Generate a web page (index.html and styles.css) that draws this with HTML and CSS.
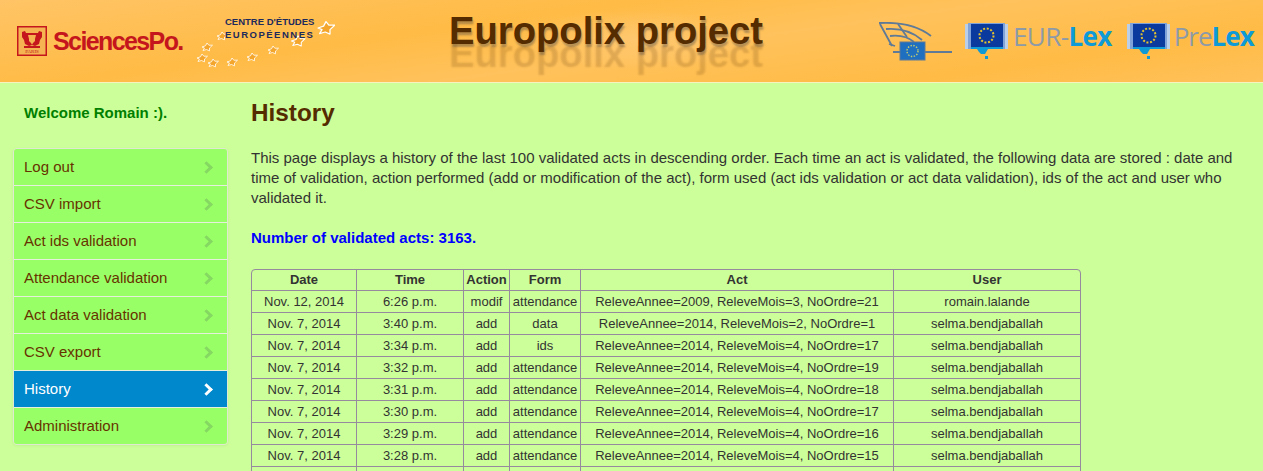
FILE: index.html
```html
<!DOCTYPE html>
<html lang="en">
<head>
    <meta charset="UTF-8">
    <title>Europolix project</title>
    <link rel="stylesheet" href="styles.css">
</head>
<body>
    <header class="banner">
        <div class="logo-sp">
            <svg class="crest" width="30" height="30" viewBox="0 0 30 30">
                <rect x="0.750" y="0.750" width="28.500" height="28.500" fill="#f5b351" stroke="#c4161c" stroke-width="1.500"/>
                <g fill="#c4161c">
                    <path d="M5 6l3-1 1 2 2 2 1 4 2 3 1 3-3 1-4-2-1-4-2-3z"/>
                    <path d="M25 6l-3-1-1 2-2 2-1 4-2 3-1 3 3 1 4-2 1-4 2-3z"/>
                    <rect x="9" y="7" width="12" height="2"/>
                    <rect x="7" y="20" width="16" height="2"/>
                </g>
                <path d="M12 10h6v5l-3 3-3-3z" fill="#f5b351"/>
                <text class="crest-word" x="15" y="27" text-anchor="middle">PARIS</text>
            </svg>
            <span class="sp-name">SciencesPo.</span>
        </div>

        <div class="logo-cee">
            <svg class="cee-stars" width="138" height="50" viewBox="0 0 138 50">
                <defs>
                    <polygon id="star" points="-5,0 -1.500,-1.200 0,-4 1.800,-1.800 5.500,-1.800 2.500,1 2.500,3.800 -0.500,2.500 -4,3.500 -2.500,1"/>
                </defs>
                <g fill="#f3a52c" stroke="#fff" stroke-width="0.800" stroke-linejoin="round">
                    <use href="#star" x="5" y="37"/>
                    <use href="#star" x="16" y="42"/>
                    <use href="#star" x="35" y="41"/>
                    <use href="#star" x="55" y="36"/>
                    <use href="#star" x="76" y="29"/>
                    <use href="#star" x="10" y="26"/>
                    <use href="#star" x="25" y="15"/>
                    <use href="#star" transform="translate(101 20) scale(1.300)"/>
                    <use href="#star" transform="translate(129 7) scale(1.600)"/>
                </g>
            </svg>
            <span class="cee-line">CENTRE D'ÉTUDES</span>
            <span class="cee-line">EUROPÉENNES</span>
        </div>

        <h1 class="title">Europolix project</h1>

        <div class="logos-right">
            <svg class="logo-ep" width="74" height="40" viewBox="0 0 74 40">
                <g fill="none" stroke="#5f7a96" stroke-width="1.800">
                    <path d="M1 1c19-1 38 2 52 13"/>
                    <path d="M2 2l12 22"/>
                    <path d="M8 7c13-1 26 2 36 11"/>
                    <path d="M12 14c9-1 17 0 24 6"/>
                    <path d="M20 2l9 13"/>
                    <path d="M11 22l6 2"/>
                    <path d="M15 30h8M46 30h28"/>
                </g>
                <rect x="22" y="20" width="25" height="18" fill="#1f6fc0" stroke="#5f7a96"/>
                <circle cx="34.500" cy="29" r="5.500" fill="none" stroke="#c3cd6e" stroke-width="1.400" stroke-dasharray="1.400 1.500"/>
            </svg>

            <div class="lex">
                <svg width="43" height="37" viewBox="0 0 43 37">
                    <use href="#lex-icon"/>
                </svg>
                <span class="lex-name">EUR-<b>Lex</b></span>
            </div>

            <div class="lex lex-pre">
                <svg width="43" height="37" viewBox="0 0 43 37">
                    <use href="#lex-icon"/>
                </svg>
                <span class="lex-name">Pre<b>Lex</b></span>
            </div>
        </div>
        <svg class="defs-only" width="0" height="0">
            <symbol id="lex-icon" viewBox="0 0 43 37">
                <rect x="0" y="1" width="43" height="25" fill="#b9cfea"/>
                <rect x="3" y="0" width="37" height="26" fill="#7fa3d8"/>
                <rect x="6" y="1" width="32" height="23" fill="#0b3a9e"/>
                <rect x="6" y="24" width="32" height="2" fill="#0e9ad7"/>
                <circle cx="21.500" cy="12.500" r="7" fill="none" stroke="#e2c230" stroke-width="2" stroke-dasharray="2 1.670"/>
                <path d="M12 26h11l-3 5h-4l-2-2z" fill="#0e9ad7"/>
                <rect x="20" y="33" width="3" height="3" fill="#0e9ad7"/>
            </symbol>
        </svg>
    </header>

    <div class="page">
        <aside class="sidebar">
            <p class="welcome">Welcome Romain :).</p>
            <nav class="menu">
                <a class="menu-item" href="#">Log out</a>
                <a class="menu-item" href="#">CSV import</a>
                <a class="menu-item" href="#">Act ids validation</a>
                <a class="menu-item" href="#">Attendance validation</a>
                <a class="menu-item" href="#">Act data validation</a>
                <a class="menu-item" href="#">CSV export</a>
                <a class="menu-item active" href="#">History</a>
                <a class="menu-item" href="#">Administration</a>
            </nav>
        </aside>

        <main class="content">
            <h2>History</h2>
            <p class="intro">This page displays a history of the last 100 validated acts in descending order. Each time an act is validated, the following data are stored : date and time of validation, action performed (add or modification of the act), form used (act ids validation or act data validation), ids of the act and user who validated it.</p>
            <p class="count">Number of validated acts: 3163.</p>

            <table class="history">
                <colgroup>
                    <col class="c-date"><col class="c-time"><col class="c-action"><col class="c-form"><col class="c-act"><col class="c-user">
                </colgroup>
                <tr><th>Date</th><th>Time</th><th>Action</th><th>Form</th><th>Act</th><th>User</th></tr>
                <tr><td>Nov. 12, 2014</td><td>6:26 p.m.</td><td>modif</td><td>attendance</td><td>ReleveAnnee=2009, ReleveMois=3, NoOrdre=21</td><td>romain.lalande</td></tr>
                <tr><td>Nov. 7, 2014</td><td>3:40 p.m.</td><td>add</td><td>data</td><td>ReleveAnnee=2014, ReleveMois=2, NoOrdre=1</td><td>selma.bendjaballah</td></tr>
                <tr><td>Nov. 7, 2014</td><td>3:34 p.m.</td><td>add</td><td>ids</td><td>ReleveAnnee=2014, ReleveMois=4, NoOrdre=17</td><td>selma.bendjaballah</td></tr>
                <tr><td>Nov. 7, 2014</td><td>3:32 p.m.</td><td>add</td><td>attendance</td><td>ReleveAnnee=2014, ReleveMois=4, NoOrdre=19</td><td>selma.bendjaballah</td></tr>
                <tr><td>Nov. 7, 2014</td><td>3:31 p.m.</td><td>add</td><td>attendance</td><td>ReleveAnnee=2014, ReleveMois=4, NoOrdre=18</td><td>selma.bendjaballah</td></tr>
                <tr><td>Nov. 7, 2014</td><td>3:30 p.m.</td><td>add</td><td>attendance</td><td>ReleveAnnee=2014, ReleveMois=4, NoOrdre=17</td><td>selma.bendjaballah</td></tr>
                <tr><td>Nov. 7, 2014</td><td>3:29 p.m.</td><td>add</td><td>attendance</td><td>ReleveAnnee=2014, ReleveMois=4, NoOrdre=16</td><td>selma.bendjaballah</td></tr>
                <tr><td>Nov. 7, 2014</td><td>3:28 p.m.</td><td>add</td><td>attendance</td><td>ReleveAnnee=2014, ReleveMois=4, NoOrdre=15</td><td>selma.bendjaballah</td></tr>
                <tr><td></td><td></td><td></td><td></td><td></td><td></td></tr>
            </table>
        </main>
    </div>
</body>
</html>
```

FILE: styles.css
```css
html, body {
    margin: 0;
    padding: 0;
    height: 471px;
    overflow: hidden;
}
body {
    font-family: "Liberation Sans", Arial, sans-serif;
    background-color: #ccff99;
    color: #333;
}

/* banner */
.banner {
    display: flex;
    align-items: flex-start;
    height: 82px;
    border-bottom: 1px solid #f6f3c0;
    background-color: #ffbe4f;
    background-image:
        radial-gradient(ellipse 120px 30px at 640px 40px, #ffc76f, transparent),
        linear-gradient(172deg, #ffc466 0%, #ffbb45 35%, #ffc25c 55%, #ffbb45 80%, #ffc15a 100%);
}
.banner > * {
    flex: none;
}
.defs-only {
    position: absolute;
}
.logo-sp {
    display: flex;
    align-items: center;
    gap: 6px;
    margin: 26px 0 0 17px;
    width: 180px;
}
.crest {
    flex: none;
}
.crest-word {
    font-family: "Liberation Serif", serif;
    font-size: 5px;
    fill: #c4161c;
}
.sp-name {
    font-size: 25px;
    font-weight: bold;
    letter-spacing: -1.6px;
    color: #c4161c;
}
.logo-cee {
    position: relative;
    width: 138px;
    height: 60px;
    padding-top: 15px;
    box-sizing: border-box;
    color: #1d2a5c;
}
.cee-stars {
    position: absolute;
    left: 0;
    top: 21px;
}
.cee-line {
    position: relative;
    display: block;
    width: 90px;
    margin-left: 28px;
    font-size: 9.5px;
    line-height: 13px;
    font-weight: bold;
    letter-spacing: 0;
    white-space: nowrap;
}
.cee-line + .cee-line {
    letter-spacing: 1.5px;
}
.title {
    margin: 10px 0 0 114px;
    width: 315px;
    font-size: 38.2px;
    line-height: 42px;
    font-weight: bold;
    color: #552b00;
    white-space: nowrap;
    text-shadow:
        1px 3px 2px rgba(90, 80, 70, 0.45),
        0 23px 2px rgba(85, 43, 0, 0.18);
}
.logos-right {
    display: flex;
    align-items: flex-start;
    margin: 22px 0 0 114px;
}
.logo-ep {
    flex: none;
    margin-right: 13px;
}
.lex {
    display: flex;
    gap: 5px;
    margin: 1px 15px 0 0;
    height: 37px;
}
.lex-pre {
    gap: 4px;
    margin-right: 0;
}
.lex-name {
    font-family: "Open Sans", "Liberation Sans", sans-serif;
    font-size: 26px;
    line-height: 27px;
    letter-spacing: -0.6px;
    color: #8d9aa8;
    white-space: nowrap;
}
.lex-pre .lex-name {
    letter-spacing: -1px;
}
.lex-name b {
    color: #0e9ad7;
}

/* page layout */
.page {
    display: flex;
}
.sidebar {
    width: 215px;
    margin-left: 13px;
    flex: none;
}
.welcome {
    margin: 21px 0 0 11px;
    font-size: 15px;
    line-height: 18px;
    font-weight: bold;
    color: #007f00;
}
.menu {
    display: flex;
    flex-direction: column;
    margin-top: 26px;
    border: 1px solid #dfe8d0;
    border-radius: 4px;
    overflow: hidden;
    box-shadow: 0 1px 3px rgba(0, 0, 0, 0.06);
}
.menu-item {
    position: relative;
    display: block;
    height: 36px;
    line-height: 36px;
    padding-left: 10px;
    font-size: 15px;
    color: #663300;
    text-decoration: none;
    background-color: #99ff66;
}
.menu-item + .menu-item {
    border-top: 1px solid #e5efdc;
}
.menu-item::after {
    content: "";
    position: absolute;
    right: 16px;
    top: 14px;
    width: 6px;
    height: 6px;
    border-top: 3px solid #85d862;
    border-right: 3px solid #85d862;
    transform: rotate(45deg);
}
.menu-item.active {
    background-color: #0088cc;
    color: #fff;
}
.menu-item.active::after {
    border-color: #fff;
}

/* main column */
.content {
    flex: 1;
    margin-left: 23px;
    padding-right: 20px;
}
h2 {
    margin: 16px 0 0;
    font-size: 24.3px;
    line-height: 28px;
    color: #552b00;
}
.intro {
    margin: 21px 0 0;
    font-size: 15px;
    line-height: 20px;
    color: #333;
}
.count {
    margin: 20px 0 0;
    font-size: 15px;
    line-height: 20px;
    font-weight: bold;
    color: #0000ff;
}
.history {
    margin-top: 21px;
    width: 830px;
    table-layout: fixed;
    border-collapse: separate;
    border-spacing: 0;
    border: 1px solid #958a9e;
    border-radius: 4px;
    font-size: 13px;
    color: #333;
}
.c-date { width: 104px; }
.c-time { width: 107px; }
.c-action { width: 46px; }
.c-form { width: 71px; }
.c-act { width: 313px; }
.history th, .history td {
    height: 21px;
    padding: 0;
    text-align: center;
    white-space: nowrap;
    border-top: 1px solid #958a9e;
    border-left: 1px solid #958a9e;
}
.history th {
    height: 19px;
    padding-bottom: 1px;
    border-top: 0;
}
.history th:first-child, .history td:first-child {
    border-left: 0;
}
```
